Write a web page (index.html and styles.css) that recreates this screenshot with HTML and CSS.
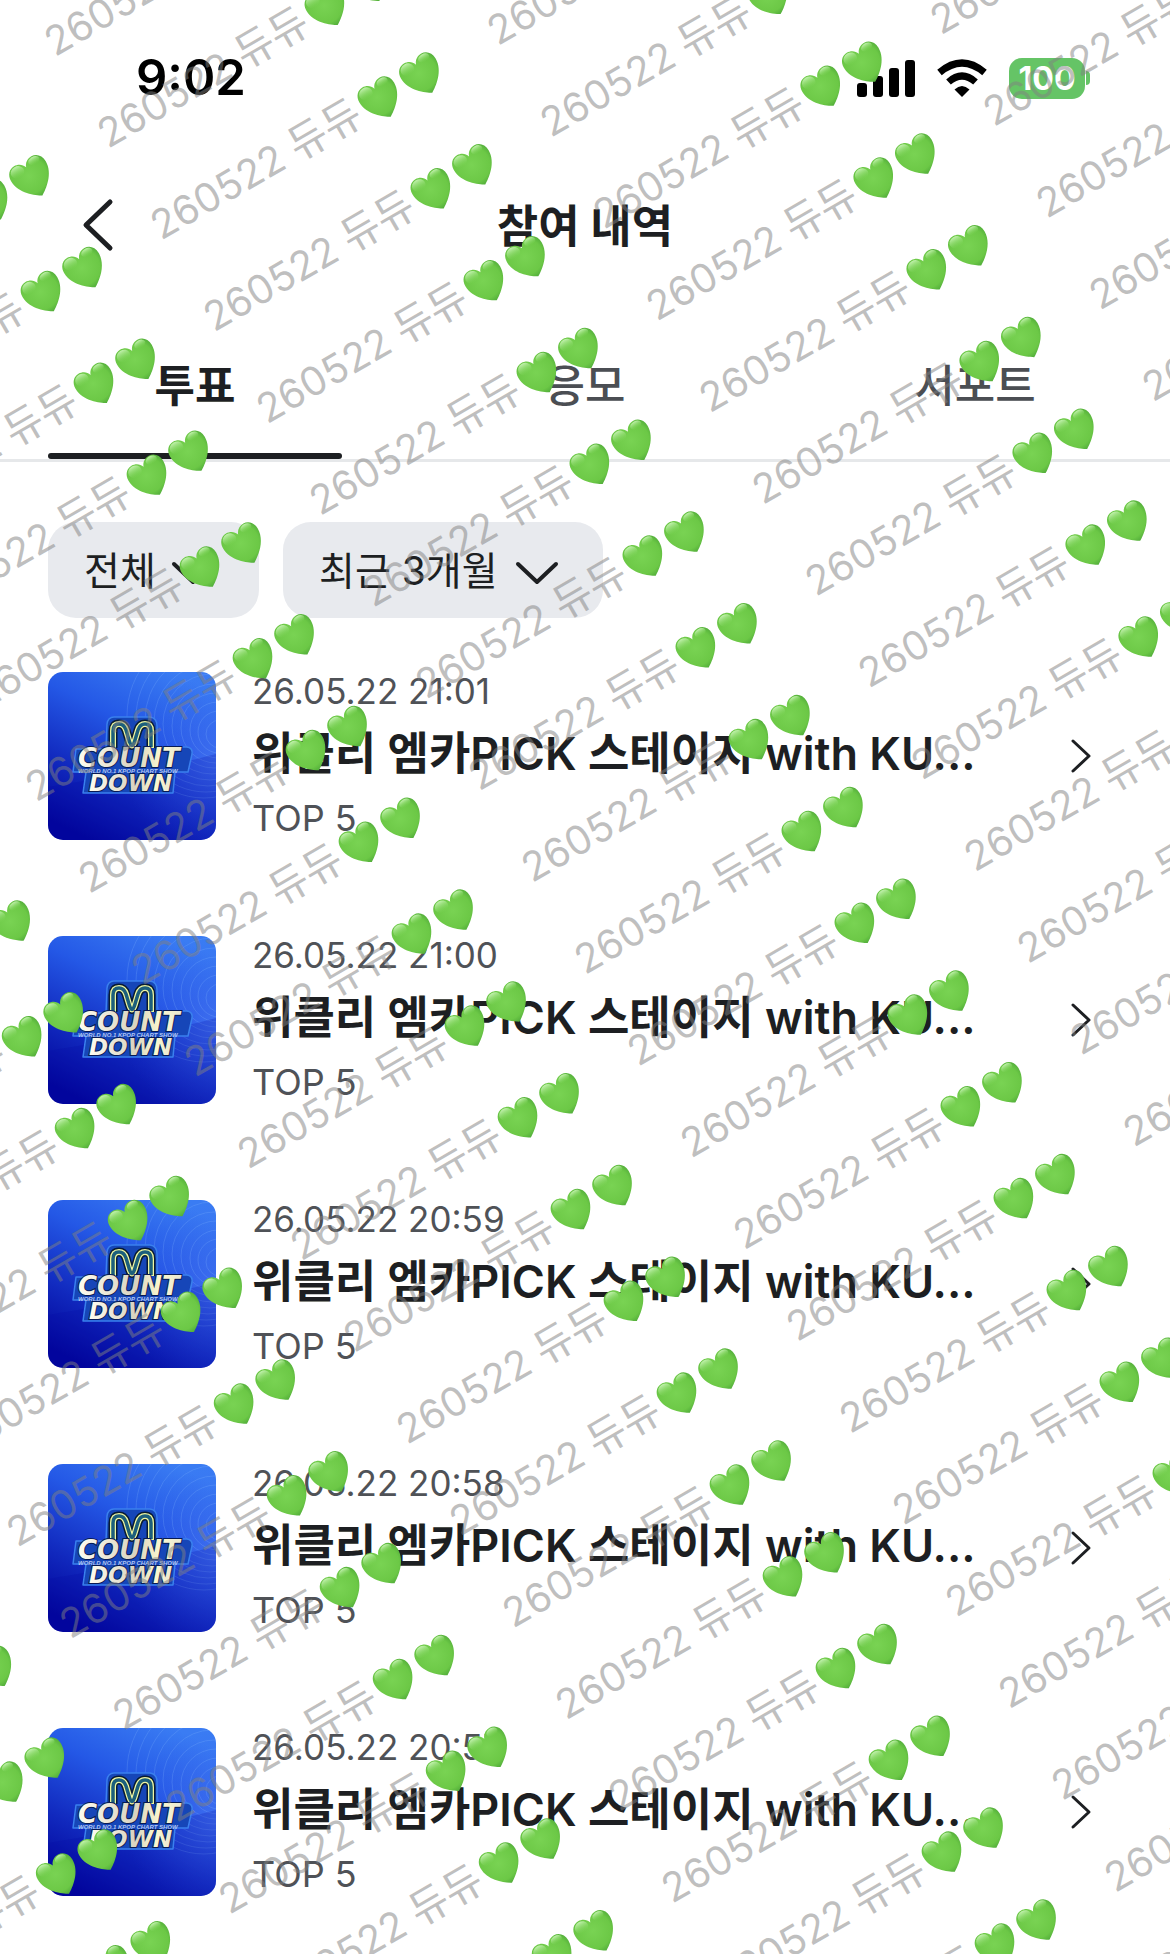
FILE: index.html
```html
<!DOCTYPE html>
<html lang="ko">
<head>
<meta charset="utf-8">
<meta name="viewport" content="width=device-width, initial-scale=1">
<title>참여 내역</title>
<link rel="stylesheet" href="styles.css">
</head>
<body>
<svg class="defs" aria-hidden="true">
  <defs>
    <radialGradient id="heart-fill" cx="0.45" cy="0.4" r="0.65">
      <stop offset="0" stop-color="#79d353"/>
      <stop offset="0.7" stop-color="#6cc846"/>
      <stop offset="1" stop-color="#48a336"/>
    </radialGradient>
    <linearGradient id="shine" x1="0" y1="0" x2="0" y2="1">
      <stop offset="0" stop-color="#c4f2b0"/>
      <stop offset="1" stop-color="#79d353" stop-opacity="0"/>
    </linearGradient>
    <linearGradient id="sky" x1="0.75" y1="0" x2="0.25" y2="1">
      <stop offset="0" stop-color="#3a7cf3"/>
      <stop offset="0.35" stop-color="#2458e6"/>
      <stop offset="0.7" stop-color="#1129be"/>
      <stop offset="1" stop-color="#02059b"/>
    </linearGradient>
    <radialGradient id="glow" cx="1" cy="0.55" r="0.55">
      <stop offset="0" stop-color="#5a84f8" stop-opacity="0.5"/>
      <stop offset="1" stop-color="#2e50e8" stop-opacity="0"/>
    </radialGradient>
    <linearGradient id="gold" x1="0" y1="0" x2="1" y2="0">
      <stop offset="0" stop-color="#fffdf0"/>
      <stop offset="0.55" stop-color="#d9d3c0"/>
      <stop offset="0.8" stop-color="#fbf8cf"/>
      <stop offset="1" stop-color="#e9e6d2"/>
    </linearGradient>
    <symbol id="heart" viewBox="0 0 48 48">
      <path d="M24 46.500C18 43 4 33 4 18.500C4 11.500 8.500 7 14 7C18.500 7 22.500 9.500 24 14C25.500 9.500 29.500 7 34 7C39.500 7 44 11.500 44 18.500C44 33 30 43 24 46.500Z" fill="url(#heart-fill)"/>
      <ellipse cx="14" cy="14" rx="7" ry="6" fill="url(#shine)"/>
      <ellipse cx="34" cy="12" rx="6" ry="4" fill="url(#shine)"/>
    </symbol>
    <symbol id="cover" viewBox="0 0 168 168">
      <rect width="168" height="168" fill="url(#sky)"/>
      <rect width="168" height="168" fill="url(#glow)"/>
      <g fill="none" stroke="#8fc0ff" stroke-opacity="0.28" stroke-width="0.8">
        <ellipse cx="172" cy="62" rx="14" ry="14"/><ellipse cx="171" cy="60" rx="21" ry="21"/>
        <ellipse cx="170" cy="58" rx="28" ry="28"/><ellipse cx="168" cy="56" rx="35" ry="35"/>
        <ellipse cx="166" cy="54" rx="42" ry="42"/><ellipse cx="164" cy="52" rx="49" ry="50"/>
        <ellipse cx="162" cy="50" rx="56" ry="58"/><ellipse cx="160" cy="48" rx="63" ry="66"/>
        <ellipse cx="158" cy="46" rx="70" ry="74"/><ellipse cx="156" cy="44" rx="77" ry="82"/>
      </g>
      <path d="M0 115C60 105 120 95 168 82V168H0Z" fill="#0309a4" fill-opacity="0.22"/>
      <path d="M59 52Q60 45 66 45H102Q109 46 109 54V75H139Q145 76 144 82L140 100H127L125 121H35L38 100H25L28 77H58Z" fill="#1646b8" stroke="#3a80ee" stroke-width="1.500" stroke-linejoin="round"/>
      <g fill="none" stroke-linecap="butt">
        <path d="M65 76V59Q65 52 71 52Q76 52 78 58L81 68Q84 79 87 68L90 58Q92 52 97 52Q103 52 103 59V76" stroke="#081b33" stroke-width="9"/>
        <path d="M65 76V59Q65 52 71 52Q76 52 78 58L81 68Q84 79 87 68L90 58Q92 52 97 52Q103 52 103 59V76" stroke="#eef5a0" stroke-width="6"/>
        <path d="M65 75V59Q65 52 71 52Q76 52 78 58L81 68Q84 79 87 68L90 58Q92 52 97 52Q103 52 103 59V75" stroke="#1c5f7c" stroke-width="3.500"/>
      </g>
    </symbol>
    <symbol id="next" viewBox="0 0 24 40">
      <path d="M5 5L21 20L5 35" fill="none" stroke="#1d1f22" stroke-width="3" stroke-linecap="round" stroke-linejoin="round"/>
    </symbol>
    <symbol id="down" viewBox="0 0 48 32">
      <path d="M5 7L24 25L43 7" fill="none" stroke="#1d1f22" stroke-width="4" stroke-linecap="round" stroke-linejoin="round"/>
    </symbol>
  </defs>
</svg>

<div class="app">
  <div class="status">
    <span class="clock">9:02</span>
    <div class="indicators">
      <svg class="signal" viewBox="0 0 58 38" aria-hidden="true">
        <rect x="0" y="24" width="10" height="14" rx="3"/><rect x="16" y="17" width="10" height="21" rx="3"/>
        <rect x="32" y="9" width="10" height="29" rx="3"/><rect x="48" y="1" width="10" height="37" rx="3"/>
      </svg>
      <svg class="wifi" viewBox="0 0 50 38" aria-hidden="true">
        <path d="M25 38L17.500 30.500Q25 23.500 32.500 30.500Z"/>
        <path d="M11.500 23Q25 11 38.500 23" fill="none" stroke="#000" stroke-width="7"/>
        <path d="M2.500 13.500Q25 -5.500 47.500 13.500" fill="none" stroke="#000" stroke-width="7"/>
      </svg>
      <div class="battery"><span class="charge">100</span></div>
    </div>
  </div>

  <header class="header">
    <button class="back" type="button" aria-label="뒤로">
      <svg viewBox="0 0 32 56" aria-hidden="true"><path d="M28 5L4 28L28 51" fill="none" stroke="#1d1f22" stroke-width="5" stroke-linecap="round" stroke-linejoin="round"/></svg>
    </button>
    <h1 class="title">참여 내역</h1>
  </header>

  <nav class="tabs">
    <a class="tab active" href="#vote" aria-current="page">투표</a>
    <a class="tab" href="#apply">응모</a>
    <a class="tab" href="#support">서포트</a>
  </nav>

  <main>
    <div class="filters">
      <div class="filter kind">
        <select aria-label="종류"><option>전체</option></select>
        <svg class="arrow" aria-hidden="true"><use href="#down"/></svg>
      </div>
      <div class="filter period">
        <select aria-label="기간"><option>최근 3개월</option></select>
        <svg class="arrow" aria-hidden="true"><use href="#down"/></svg>
      </div>
    </div>

    <ul class="list">
      <li><a class="entry" href="#vote-5">
        <svg class="thumb" viewBox="0 0 168 168"><use href="#cover"/><text class="logo big" x="30" y="95">COUNT</text><text class="logo tiny" x="30" y="101">WORLD NO.1 KPOP CHART SHOW</text><text class="logo" x="41" y="119">DOWN</text></svg>
        <div class="info"><time class="date">26.05.22 21:01</time><strong class="name">위클리 엠카PICK 스테이지 with KU...</strong><span class="meta">TOP 5</span></div>
        <svg class="next" aria-hidden="true"><use href="#next"/></svg>
      </a></li>
      <li><a class="entry" href="#vote-4">
        <svg class="thumb" viewBox="0 0 168 168"><use href="#cover"/><text class="logo big" x="30" y="95">COUNT</text><text class="logo tiny" x="30" y="101">WORLD NO.1 KPOP CHART SHOW</text><text class="logo" x="41" y="119">DOWN</text></svg>
        <div class="info"><time class="date">26.05.22 21:00</time><strong class="name">위클리 엠카PICK 스테이지 with KU...</strong><span class="meta">TOP 5</span></div>
        <svg class="next" aria-hidden="true"><use href="#next"/></svg>
      </a></li>
      <li><a class="entry" href="#vote-3">
        <svg class="thumb" viewBox="0 0 168 168"><use href="#cover"/><text class="logo big" x="30" y="95">COUNT</text><text class="logo tiny" x="30" y="101">WORLD NO.1 KPOP CHART SHOW</text><text class="logo" x="41" y="119">DOWN</text></svg>
        <div class="info"><time class="date">26.05.22 20:59</time><strong class="name">위클리 엠카PICK 스테이지 with KU...</strong><span class="meta">TOP 5</span></div>
        <svg class="next" aria-hidden="true"><use href="#next"/></svg>
      </a></li>
      <li><a class="entry" href="#vote-2">
        <svg class="thumb" viewBox="0 0 168 168"><use href="#cover"/><text class="logo big" x="30" y="95">COUNT</text><text class="logo tiny" x="30" y="101">WORLD NO.1 KPOP CHART SHOW</text><text class="logo" x="41" y="119">DOWN</text></svg>
        <div class="info"><time class="date">26.05.22 20:58</time><strong class="name">위클리 엠카PICK 스테이지 with KU...</strong><span class="meta">TOP 5</span></div>
        <svg class="next" aria-hidden="true"><use href="#next"/></svg>
      </a></li>
      <li><a class="entry" href="#vote-1">
        <svg class="thumb" viewBox="0 0 168 168"><use href="#cover"/><text class="logo big" x="30" y="95">COUNT</text><text class="logo tiny" x="30" y="101">WORLD NO.1 KPOP CHART SHOW</text><text class="logo" x="41" y="119">DOWN</text></svg>
        <div class="info"><time class="date">26.05.22 20:57</time><strong class="name">위클리 엠카PICK 스테이지 with KU...</strong><span class="meta">TOP 5</span></div>
        <svg class="next" aria-hidden="true"><use href="#next"/></svg>
      </a></li>
    </ul>
  </main>

  <div class="watermark" aria-hidden="true"><div class="sheet"></div></div>
</div>

<template id="stamp">
  <div class="stamp"><span class="stamp-text">260522 <span class="nick">듀듀</span></span><svg class="heart"><use href="#heart"/></svg><svg class="heart"><use href="#heart"/></svg></div>
</template>
<script src="watermark.js"></script>
</body>
</html>
```
FILE: styles.css
```css
* { box-sizing: border-box; }

body {
  margin: 0;
  background: #fff;
  color: #1d1f22;
  font-family: Inter, "Noto Sans CJK KR", sans-serif;
}

a { color: inherit; text-decoration: none; }

.defs { position: absolute; width: 0; height: 0; }

.app {
  position: relative;
  min-height: 100vh;
  overflow: hidden;
}

.status {
  display: flex;
  justify-content: space-between;
  align-items: center;
  height: 156px;
  padding: 0 80px 0 136px;
}

.clock {
  color: #000;
  font-size: 49px;
  font-weight: 600;
  line-height: 60px;
}

.indicators { display: flex; align-items: center; gap: 22px; }
.signal { width: 58px; height: 38px; }
.wifi { width: 50px; height: 38px; }

.battery { display: flex; align-items: center; gap: 1px; }
.charge {
  width: 76px;
  height: 41px;
  border-radius: 13px;
  background: #65c466;
  color: #fff;
  font-size: 32px;
  font-weight: 700;
  line-height: 41px;
  text-align: center;
}
.battery::after {
  content: "";
  width: 4px;
  height: 14px;
  border-radius: 0 4px 4px 0;
  background: #65c466;
}

.header {
  display: grid;
  grid-template-columns: 72px 1fr 72px;
  align-items: center;
  height: 138px;
  padding: 0 48px;
}
.back {
  display: flex;
  justify-content: flex-end;
  padding: 0 6px;
  border: 0;
  background: none;
}
.back svg { width: 32px; height: 56px; }
.title {
  margin: 0;
  padding-top: 4px;
  font-size: 45px;
  font-weight: 700;
  line-height: 64px;
  text-align: center;
}

.tabs {
  display: grid;
  grid-template-columns: repeat(3, 1fr);
  height: 168px;
  border-bottom: 3px solid #e6e8ea;
}
.tab {
  display: flex;
  justify-content: center;
  margin: 0 48px;
  padding-top: 60px;
  border-bottom: 6px solid transparent;
  color: #4b4e53;
  font-size: 44px;
  font-weight: 500;
  line-height: 64px;
}
.tab.active {
  position: relative;
  color: #1d1f22;
  font-weight: 700;
}
.tab.active::after {
  content: "";
  position: absolute;
  inset: auto 0 -6px;
  height: 6px;
  border-radius: 3px;
  background: #1d1f22;
}

.filters { display: flex; gap: 24px; padding: 60px 48px 54px; }
.filter { position: relative; }
.filter select {
  width: 100%;
  height: 96px;
  padding: 2px 36px 0;
  border: 0;
  border-radius: 28px;
  background: #e8eaee;
  color: #1d1f22;
  font: 400 39px/60px Inter, "Noto Sans CJK KR", sans-serif;
  appearance: none;
}
.kind { width: 211px; }
.period { width: 320px; }
.arrow {
  position: absolute;
  top: 35px;
  right: 42px;
  width: 48px;
  height: 32px;
  pointer-events: none;
}

.list {
  display: flex;
  flex-direction: column;
  gap: 96px;
  margin: 0;
  padding: 0 48px 48px;
  list-style: none;
}
.entry { display: flex; align-items: center; gap: 36px; padding-right: 30px; }
.thumb { flex: none; width: 168px; height: 168px; border-radius: 15px; }
.logo {
  fill: url(#gold);
  stroke: #081a52;
  stroke-width: 2px;
  paint-order: stroke;
  font: italic 700 23px "DejaVu Sans", sans-serif;
}
.logo.big { font-size: 26px; }
.logo.tiny {
  fill: #b4c6f4;
  stroke: none;
  font: italic 700 6px "Liberation Sans", sans-serif;
}

.info {
  display: flex;
  flex: 1;
  flex-direction: column;
  gap: 14px;
  min-width: 0;
  padding-bottom: 2px;
}
.date {
  color: #4f5257;
  font-size: 35px;
  line-height: 38px;
}
.meta {
  color: #4f5257;
  font-size: 36px;
  line-height: 40px;
}
.name {
  font-size: 45px;
  font-weight: 600;
  line-height: 60px;
  white-space: nowrap;
}
.next { flex: none; width: 24px; height: 40px; }

.watermark {
  position: absolute;
  inset: 0;
  overflow: hidden;
  pointer-events: none;
}
.sheet {
  position: absolute;
  top: 0;
  left: 0;
  transform: rotate(-30deg);
  transform-origin: 0 0;
}
.stamp { position: absolute; display: flex; height: 48px; }
.stamp-text {
  width: 237px;
  color: rgba(128, 128, 128, 0.5);
  font-size: 40px;
  font-weight: 400;
  line-height: 48px;
  white-space: nowrap;
}
.nick { font-size: 42px; }
.heart { flex: none; width: 48px; height: 48px; }
```
FILE: watermark.js
```js
// Tiles the slanted stamp over the whole page.
const COLUMN = 389;
const ROW = 106;
const START = { u: 19, v: 38 };
const LENGTH = 335;

const area = document.querySelector('.watermark');
const sheet = document.querySelector('.sheet');
const stamp = document.querySelector('#stamp').content.firstElementChild;
const cos = Math.cos(Math.PI / 6);
const sin = Math.sin(Math.PI / 6);

function tile() {
  const w = area.clientWidth;
  const h = area.clientHeight;
  sheet.replaceChildren();
  for (let v = START.v - ROW; v < w * sin + h * cos; v += ROW) {
    const first = START.u - COLUMN * Math.ceil((h * sin) / COLUMN + 1);
    for (let u = first; u < w * cos; u += COLUMN) {
      const x = u * cos + v * sin;
      const y = v * cos - u * sin;
      const endX = x + LENGTH * cos + 24;
      const endY = y - LENGTH * sin;
      if (endX < 0 || x > w || y + 48 < 0 || endY > h) continue;
      const copy = stamp.cloneNode(true);
      copy.style.left = `${u}px`;
      copy.style.top = `${v}px`;
      sheet.append(copy);
    }
  }
}

tile();
window.addEventListener('resize', tile);
```
